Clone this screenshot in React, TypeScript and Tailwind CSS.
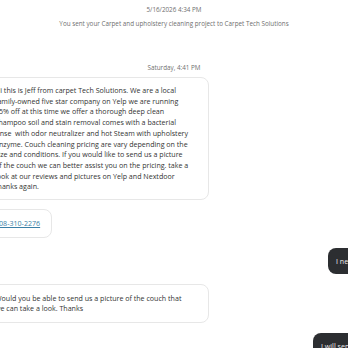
const jeffLines = [
  "Hi this is Jeff from carpet Tech Solutions. We are a local",
  "family-owned five star company on Yelp we are running",
  "25% off at this time we offer a thorough deep clean",
  "shampoo soil and stain removal comes with a bacterial",
  "rinse\u00a0 with odor neutralizer and hot Steam with upholstery",
  "enzyme. Couch cleaning pricing are vary depending on the",
  "size and conditions. If you would like to send us a picture",
  "of the couch we can better assist you on the pricing. take a",
  "look at our reviews and pictures on Yelp and Nextdoor",
  "thanks again.",
];

function IncomingBubble({ lines, pad }: { lines: string[]; pad: string }) {
  return (
    <div
      className={`ml-[-14px] w-[223px] rounded-[8px] border border-[#e7e7e7] bg-white px-[8px] ${pad} text-[7.1px] leading-[10.7px] text-[#333333] whitespace-nowrap`}
    >
      {lines.map((line) => (
        <div key={line}>{line}</div>
      ))}
    </div>
  );
}

function OutgoingBubble({ text, offset }: { text: string; offset: string }) {
  return (
    <div className={`flex ${offset}`}>
      <div className="shrink-0 whitespace-nowrap rounded-[8px] bg-[#2c2e31] px-[8px] py-[7px] text-[7.1px] leading-[12px] text-[#ececec]">
        {text}
      </div>
    </div>
  );
}

export default function App() {
  return (
    <div className="h-[348px] w-[348px] overflow-hidden bg-white font-['Open_Sans',sans-serif]">
      <div className="pt-[5px] text-center text-[6.3px] leading-[9px] text-[#6f6f6f]">
        5/16/2026 4:34 PM
      </div>
      <div className="mt-[5px] text-center text-[6.3px] leading-[9px] text-[#6f6f6f]">
        You sent your Carpet and upholstery cleaning project to Carpet Tech Solutions
      </div>
      <div className="mt-[35px] text-center text-[6.3px] leading-[9px] text-[#6f6f6f]">
        Saturday, 4:41 PM
      </div>

      <div className="mt-[5px] flex flex-col">
        <IncomingBubble lines={jeffLines} pad="py-[7px]" />

        <div className="mt-[9px] flex">
          <div className="ml-[-14px] rounded-[8px] border border-[#e7e7e7] bg-white py-[8px] pl-[8px] pr-[11px] text-[7.1px] leading-[10.7px]">
            <a href="#" className="text-[#3a7fa6] underline">
              508-310-2276
            </a>
          </div>
        </div>

        <div className="mt-[10px]">
          <OutgoingBubble text="I need a quote for cleaning my couch" offset="ml-[328px]" />
        </div>

        <div className="mt-[10px]">
          <IncomingBubble
            lines={[
              "Would you be able to send us a picture of the couch that",
              "we can take a look. Thanks",
            ]}
            pad="py-[8px]"
          />
        </div>

        <div className="mt-[10px]">
          <OutgoingBubble text="I will send one tonight" offset="ml-[313px]" />
        </div>
      </div>
    </div>
  );
}
